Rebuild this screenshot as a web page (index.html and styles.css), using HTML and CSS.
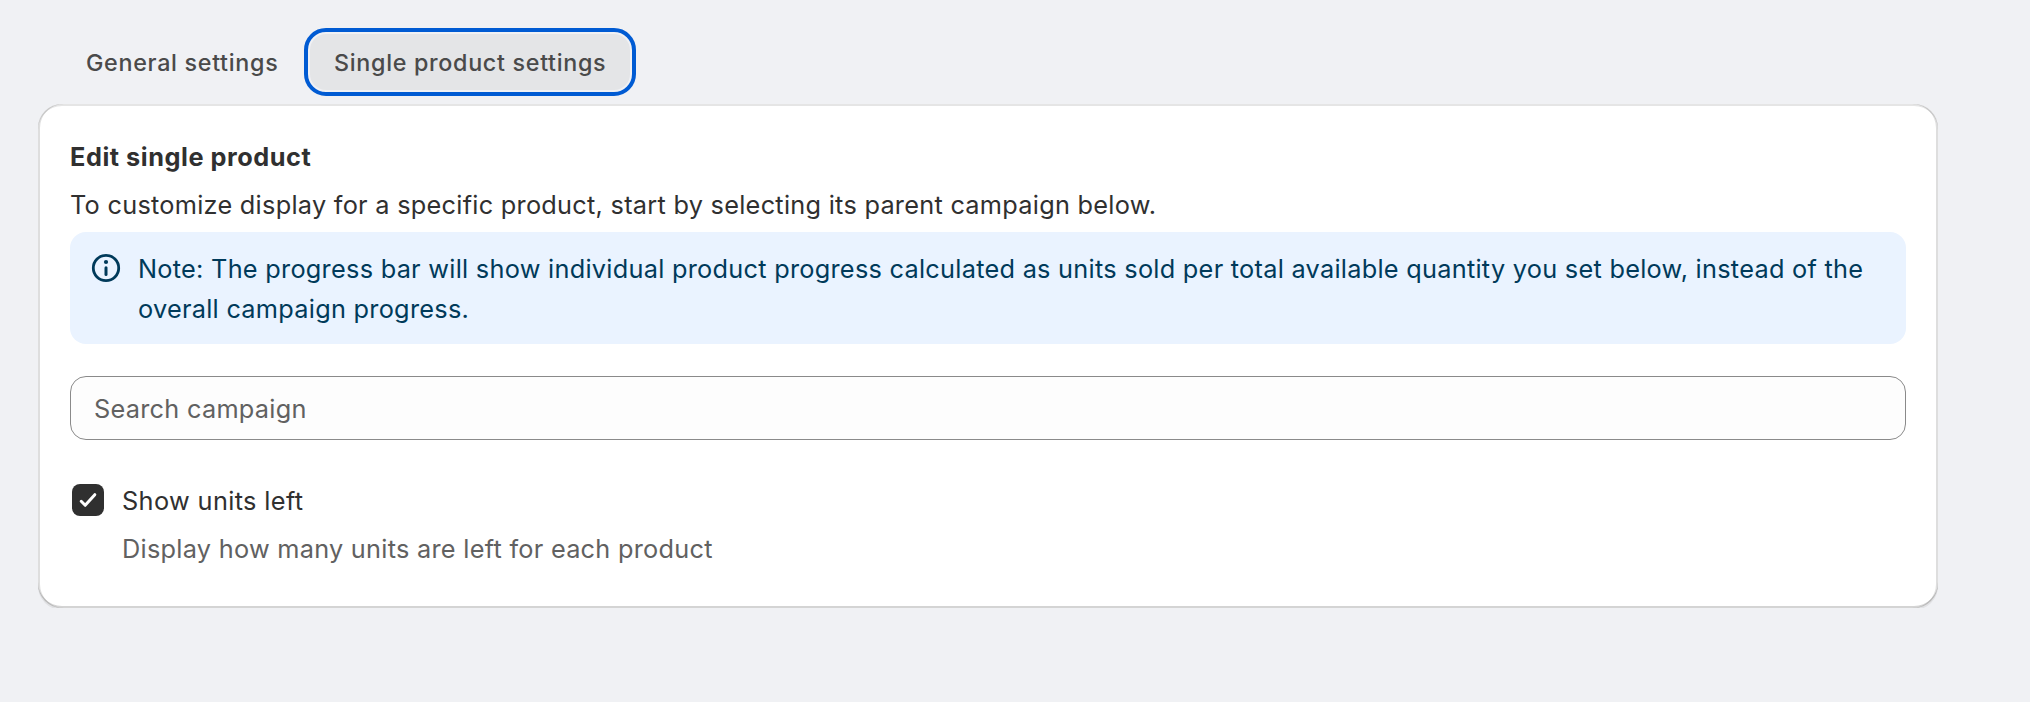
FILE: index.html
```html
<!DOCTYPE html>
<html lang="en">
<head>
<meta charset="utf-8">
<title>Single product settings</title>
<link rel="stylesheet" href="styles.css">
</head>
<body>
<main class="page">
  <nav class="tabs">
    <button class="tab" type="button">General settings</button>
    <button class="tab tab-active" type="button">Single product settings</button>
  </nav>
  <section class="card">
    <h2 class="heading">Edit single product</h2>
    <p class="lead">To customize display for a specific product, start by selecting its parent campaign below.</p>
    <div class="banner">
      <svg class="banner-icon" viewBox="0 0 40 40" aria-hidden="true">
        <circle cx="20" cy="20" r="12.7" fill="none" stroke="currentColor" stroke-width="2.8"/>
        <circle cx="20" cy="14" r="2.1" fill="currentColor"/>
        <path d="M20 19.8V26.5" fill="none" stroke="currentColor" stroke-width="3" stroke-linecap="round"/>
      </svg>
      <p class="banner-text">Note: The progress bar will show individual product progress calculated as units sold per total available quantity you set below, instead of the overall campaign progress.</p>
    </div>
    <input class="search" type="text" placeholder="Search campaign">
    <div class="choice">
      <span class="checkbox">
        <svg class="check" viewBox="0 0 32 32" aria-hidden="true">
          <path d="M9.2 17.3L13.2 21.3L22.8 10.7" fill="none" stroke="#fff" stroke-width="3" stroke-linecap="round" stroke-linejoin="round"/>
        </svg>
      </span>
      <div class="choice-body">
        <div class="choice-label">Show units left</div>
        <div class="choice-help">Display how many units are left for each product</div>
      </div>
    </div>
  </section>
</main>
</body>
</html>
```
FILE: styles.css
```css
* { box-sizing: border-box; }

body {
  margin: 0;
  background: #f0f1f4;
  color: #303030;
  font-family: Inter, "Liberation Sans", sans-serif;
  font-size: 25.3px;
  line-height: 40px;
  letter-spacing: 0.27px;
}

.page { padding: 34px 92px 0 38px; }

.tabs {
  display: flex;
  gap: 8px;
  padding-left: 24px;
  margin-bottom: 14px;
}

.tab {
  width: 240px;
  height: 56px;
  padding: 2px 0 0 24px;
  border: 0;
  border-radius: 16px;
  background: transparent;
  color: #4a4a4a;
  font: 550 23.3px/32px Inter, "Liberation Sans", sans-serif;
  letter-spacing: 0.69px;
  text-align: left;
  white-space: nowrap;
}

.tab-active {
  width: 320px;
  background: #e4e5e7;
  outline: 4px solid #005bd3;
  outline-offset: 2px;
}

.card {
  height: 504px;
  padding: 33px 32px 32px;
  border-radius: 24px;
  background: #fff;
  box-shadow:
    0 2px 0 rgba(26, 26, 26, 0.07),
    inset 0 -2px 0 rgba(0, 0, 0, 0.17),
    inset 2px 0 0 rgba(0, 0, 0, 0.13),
    inset -2px 0 0 rgba(0, 0, 0, 0.13),
    inset 0 2px 0 rgba(204, 204, 204, 0.5);
}

.heading {
  margin: 0 0 8px;
  font-size: 25.3px;
  font-weight: 650;
  line-height: 40px;
  letter-spacing: 0.54px;
}

.lead { margin: 0 0 7px; }

.banner {
  display: flex;
  gap: 12px;
  height: 112px;
  padding: 16px;
  border-radius: 16px;
  background: #eaf3ff;
  color: #003a5a;
}

.banner-icon {
  flex: none;
  width: 40px;
  height: 40px;
}

.banner-text { margin: 1px 0 0; }

.search {
  display: block;
  width: 100%;
  height: 64px;
  margin: 32px 0 40px;
  padding: 1px 23px 0;
  border: 1px solid #8a8a8a;
  border-radius: 16px;
  background: #fdfdfd;
  font: inherit;
  letter-spacing: inherit;
}

.search::placeholder { color: #616161; opacity: 1; }

.choice {
  display: flex;
  gap: 18px;
  padding-left: 2px;
}

.checkbox {
  flex: none;
  width: 32px;
  height: 32px;
  margin-top: 4px;
  border-radius: 8px;
  background: #303030;
}

.check { display: block; }

.choice-body { padding-top: 1px; }

.choice-label { letter-spacing: 0.37px; }

.choice-help {
  margin-top: 8px;
  color: #616161;
}
```
